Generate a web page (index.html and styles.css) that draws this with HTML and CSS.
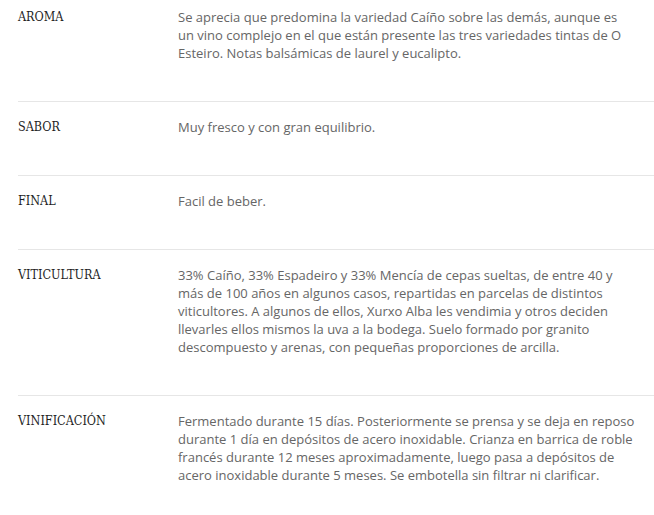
FILE: index.html
```html
<!DOCTYPE html>
<html lang="es">
<head>
<meta charset="utf-8">
<title>Ficha de cata</title>
<link rel="stylesheet" href="styles.css">
</head>
<body>
<div class="sheet">
  <div class="row first">
    <div class="label">AROMA</div>
    <div class="text">Se aprecia que predomina la variedad Caíño sobre las demás, aunque es un vino complejo en el que están presente las tres variedades tintas de O Esteiro. Notas balsámicas de laurel y eucalipto.</div>
  </div>
  <div class="row">
    <div class="label">SABOR</div>
    <div class="text">Muy fresco y con gran equilibrio.</div>
  </div>
  <div class="row">
    <div class="label">FINAL</div>
    <div class="text">Facil de beber.</div>
  </div>
  <div class="row">
    <div class="label">VITICULTURA</div>
    <div class="text">33% Caíño, 33% Espadeiro y 33% Mencía de cepas sueltas, de entre 40 y más de 100 años en algunos casos, repartidas en parcelas de distintos viticultores. A algunos de ellos, Xurxo Alba les vendimia y otros deciden llevarles ellos mismos la uva a la bodega. Suelo formado por granito descompuesto y arenas, con pequeñas proporciones de arcilla.</div>
  </div>
  <div class="row">
    <div class="label">VINIFICACIÓN</div>
    <div class="text">Fermentado durante 15 días. Posteriormente se prensa y se deja en reposo durante 1 día en depósitos de acero inoxidable. Crianza en barrica de roble francés durante 12 meses aproximadamente, luego pasa a depósitos de acero inoxidable durante 5 meses. Se embotella sin filtrar ni clarificar.</div>
  </div>
</div>
</body>
</html>
```

FILE: styles.css
```css
html, body {
  margin: 0;
  padding: 0;
  background: #ffffff;
}

.sheet {
  padding: 8px 0 0 18px;
}

.row {
  display: grid;
  grid-template-columns: 160px 1fr;
  padding: 16px 0 39px;
  border-bottom: 1px solid #e6e6e6;
  line-height: 18px;
}

.row.first {
  padding-top: 0;
}

.label {
  font-family: "DejaVu Serif Condensed", "DejaVu Serif", serif;
  font-stretch: condensed;
  font-size: 12.5px;
  color: #1e1e1e;
}

.text {
  font-family: "Open Sans", "Noto Sans", sans-serif;
  font-size: 13px;
  color: #666666;
  padding-right: 19px;
}
```
